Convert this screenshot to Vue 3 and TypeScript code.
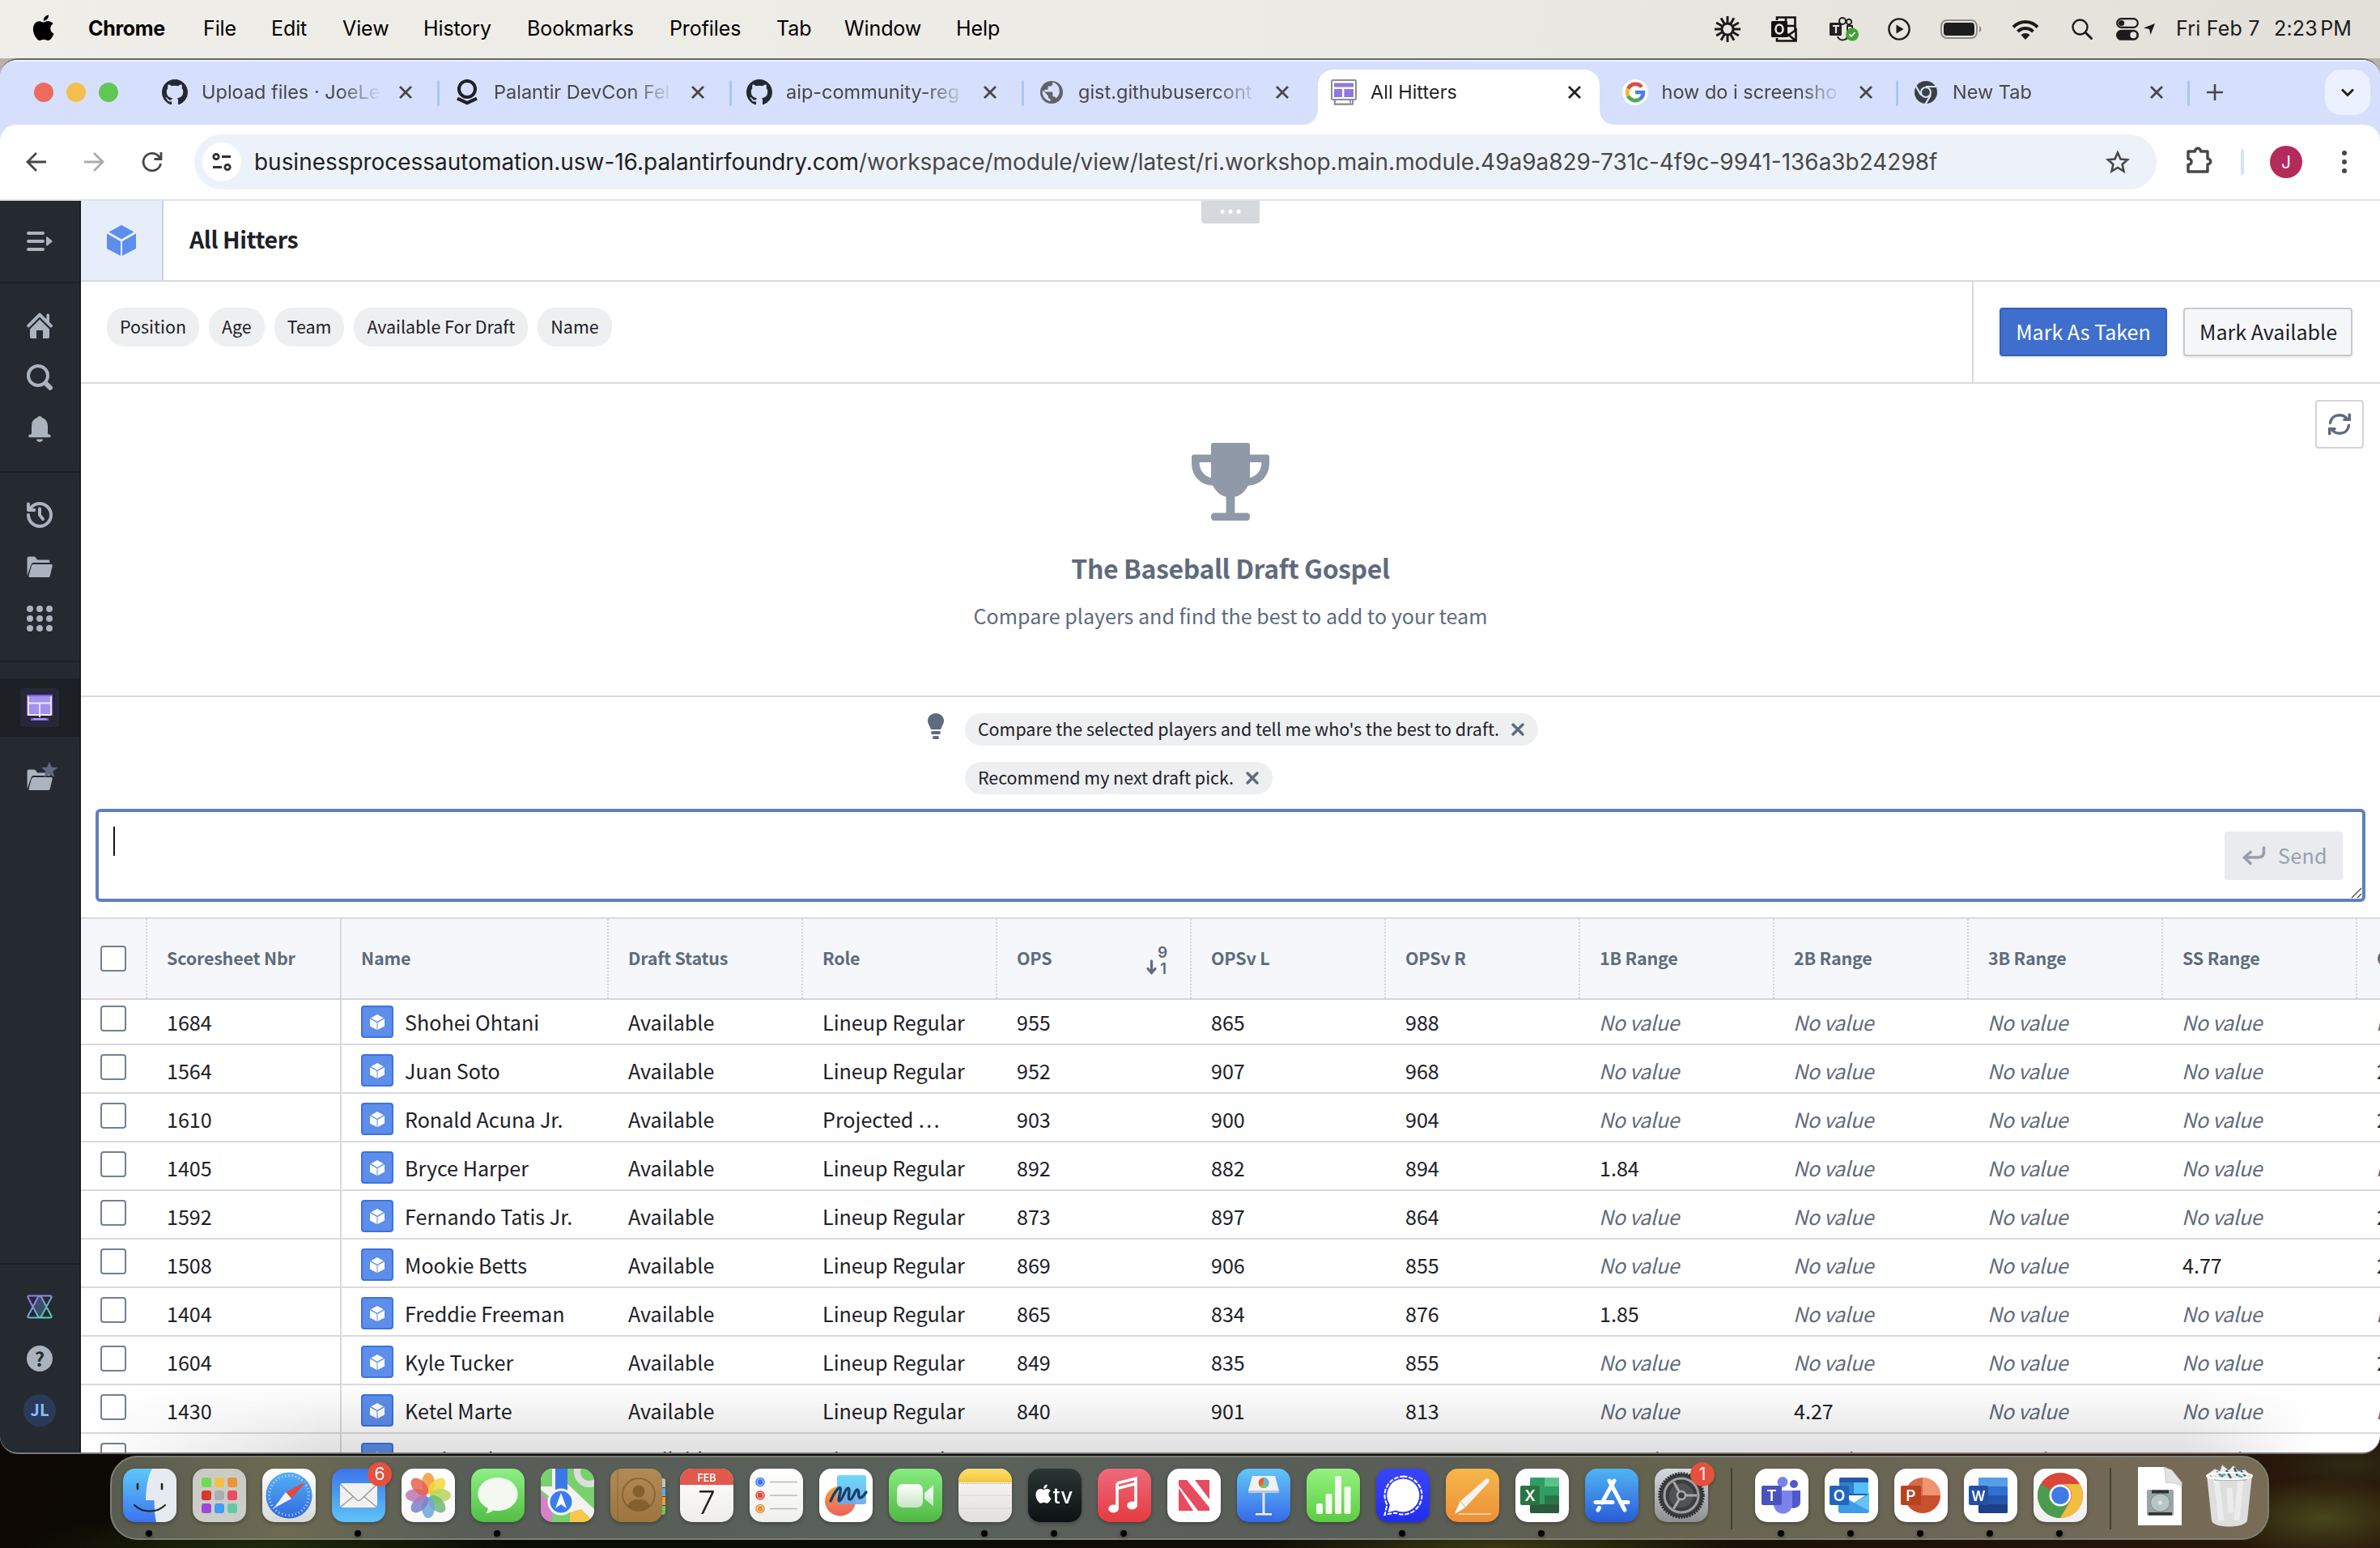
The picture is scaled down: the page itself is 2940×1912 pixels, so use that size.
<script setup lang="ts">
interface MenuItem { label: string; width: number }
interface Tab { title: string; icon: string; active?: boolean; sep?: boolean }
interface DockApp { name: string; running?: boolean; badge?: string }

const menus: MenuItem[] = [
  { label: 'File', width: 84 }, { label: 'Edit', width: 88 }, { label: 'View', width: 100 },
  { label: 'History', width: 128 }, { label: 'Bookmarks', width: 176 }, { label: 'Profiles', width: 132 },
  { label: 'Tab', width: 84 }, { label: 'Window', width: 138 }, { label: 'Help', width: 80 },
]

const gh = '<path fill="#24292f" d="M8 0C3.58 0 0 3.58 0 8c0 3.54 2.29 6.53 5.47 7.59.4.07.55-.17.55-.38 0-.19-.01-.82-.01-1.49-2.01.37-2.53-.49-2.69-.94-.09-.23-.48-.94-.82-1.13-.28-.15-.68-.52-.01-.53.63-.01 1.08.58 1.23.82.72 1.21 1.87.87 2.33.66.07-.52.28-.87.51-1.07-1.78-.2-3.64-.89-3.64-3.95 0-.87.31-1.59.82-2.15-.08-.2-.36-1.02.08-2.12 0 0 .67-.21 2.2.82.64-.18 1.32-.27 2-.27s1.36.09 2 .27c1.53-1.04 2.2-.82 2.2-.82.44 1.1.16 1.92.08 2.12.51.56.82 1.27.82 2.15 0 3.07-1.87 3.75-3.65 3.95.29.25.54.73.54 1.48 0 1.07-.01 1.93-.01 2.2 0 .21.15.46.55.38A8.01 8.01 0 0 0 16 8c0-4.42-3.58-8-8-8z"/>'
const favicons: Record<string, string> = {
  github: gh,
  palantir: '<circle cx="8" cy="6" r="5" fill="none" stroke="#1e2124" stroke-width="2"/><path d="M2 11.8 8 14.6l6-2.8" fill="none" stroke="#1e2124" stroke-width="2.1"/>',
  globe: '<circle cx="8" cy="8" r="7" fill="#5f6368"/><path fill="#d6e0fc" d="M8.6 1.8v1.1c0 .8-.6 1.4-1.4 1.4H5.8v1.4c0 .4-.3.7-.7.7H3.7v1.4H8c.4 0 .7.3.7.7v2.1h.7c.6 0 1.200.4 1.400 1a5.600 5.600 0 0 0-2.200-9.800zM7.300 13.500v-1.300c-.8 0-1.400-.6-1.400-1.400v-.7L2.500 6.700a5.600 5.600 0 0 0 4.800 6.800z"/>',
  workshop: '<path d="M4 12h8v3.300H2.300V12.500" fill="#fff" stroke="#8a8d91" stroke-width=".8"/><rect x=".5" y=".5" width="15" height="12" rx=".6" fill="#fff" stroke="#8a8d91"/><path fill="#8f78e0" d="M2 2.200h12v2.600H2zM2 6h5v5H2zM8.200 6H14v5H8.200z"/><path d="M13.500 13v2.400H2.500V13" fill="none" stroke="#8a8d91"/>',
  google: '<circle cx="8" cy="8" r="8" fill="#fff"/><g fill="none" stroke-width="2.300"><path d="M12 4.700A5 5 0 0 0 3.600 5.800" stroke="#d94f3d"/><path d="M3.600 5.800a5 5 0 0 0 0 4.500" stroke="#f2b83a"/><path d="M3.600 10.300A5 5 0 0 0 11.300 11.900" stroke="#53a857"/><path d="M11.200 12A5 5 0 0 0 13 8H8" stroke="#4a80ee"/></g>',
  chrome: '<circle cx="8" cy="8" r="7" fill="#3c4043"/><circle cx="8" cy="8" r="3" fill="none" stroke="#d6e0fc" stroke-width="1.100"/><path d="M8 4.500h6.500M5 9.700 1.900 4.300M11 9.700 7.800 15.200" stroke="#d6e0fc" stroke-width="1.100"/>',
}
const tabs: Tab[] = [
  { title: 'Upload files · JoeLe', icon: 'github', sep: true },
  { title: 'Palantir DevCon Fel', icon: 'palantir', sep: true },
  { title: 'aip-community-reg', icon: 'github', sep: true },
  { title: 'gist.githubusercont', icon: 'globe' },
  { title: 'All Hitters', icon: 'workshop', active: true },
  { title: 'how do i screensho', icon: 'google', sep: true },
  { title: 'New Tab', icon: 'chrome', sep: true },
]

const folder = '<path d="M.3 13.500V2.700C.3 2.100.7 1.700 1.300 1.700H4.500c.5 0 .8.300 1.100.7L6.600 3.700h6.600c.6 0 1 .4 1 1v.8H4.300C3.600 5.500 3 5.900 2.800 6.600z"/><path d="M4.200 6.500h11c.5 0 .8.400.7.9l-1.500 6.200c-.1.500-.6.900-1.100.9H2c-.5 0-.8-.4-.7-.9L3 7.400c.2-.5.600-.9 1.200-.9z"/>'
const sideTop: string[] = [
  '<path d="M16 8.300c0-.3-.1-.5-.3-.7L14 5.900V1.500c0-.5-.4-.8-.9-.8s-.9.300-.9.800v2.600L8.700.6A1 1 0 0 0 7.300.6l-7 7a1 1 0 0 0 1.400 1.400L8 2.700 14.300 9c.7.7 1.700.1 1.700-.7z"/><path d="M8 4.300 2 10.300V15c0 .6.400 1 1 1h3v-5h4v5h3c.6 0 1-.4 1-1v-4.700z"/>',
  '<path fill-rule="evenodd" d="m15.550 13.430-2.670-2.670A6.940 6.940 0 0 0 14 7a7 7 0 1 0-7 7c1.390 0 2.680-.420 3.760-1.110l2.670 2.670a1.500 1.500 0 0 0 2.120-2.130zM7 12A5 5 0 1 1 7 2a5 5 0 0 1 0 10z"/>',
  '<path d="M8 16c1.100 0 2-.8 2-1.700H6c0 .9.900 1.700 2 1.700zM14 11.400c-.6 0-1-.5-1-1V6c0-2.400-1.500-4.400-3.600-5.100A1.500 1.500 0 0 0 8 0c-.7 0-1.200.4-1.400.9A5.400 5.400 0 0 0 3 6v4.400c0 .5-.4 1-1 1-.5 0-.9.400-.9.900s.4.800.9.800h12c.5 0 .9-.4.900-.8s-.4-.9-.9-.9z"/>',
]
const sideMid: string[] = [
  '<path fill-rule="evenodd" d="M8 3.200c-.6 0-1 .4-1 1V8c0 .3.100.5.300.7l2 2.600a1 1 0 0 0 1.500-1.300L9 7.700V4.200c0-.6-.4-1-1-1z"/><path d="M8 0C5.600 0 3.500 1 2 2.700V1.300a1 1 0 0 0-2 0V5c0 .6.400 1 1 1h3.700a1 1 0 0 0 0-2H3.500A6 6 0 1 1 2 8a1 1 0 0 0-2 0 8 8 0 1 0 8-8z"/>',
  folder,
  '<circle cx="2" cy="2" r="2"/><circle cx="8" cy="2" r="2"/><circle cx="14" cy="2" r="2"/><circle cx="2" cy="8" r="2"/><circle cx="8" cy="8" r="2"/><circle cx="14" cy="8" r="2"/><circle cx="2" cy="14" r="2"/><circle cx="8" cy="14" r="2"/><circle cx="14" cy="14" r="2"/>',
]

const filters = ['Position', 'Age', 'Team', 'Available For Draft', 'Name']
const prompts = ["Compare the selected players and tell me who's the best to draft.", 'Recommend my next draft pick.']
const columns = ['Draft Status', 'Role', 'OPS', 'OPSv L', 'OPSv R', '1B Range', '2B Range', '3B Range', 'SS Range', 'OF Range']

const LR = 'Lineup Regular'
const NV = 'No value'
type Row = [string, string, string[]]
const rows: Row[] = [
  ['1684', 'Shohei Ohtani', [LR, '955', '865', '988', NV, NV, NV, NV, NV]],
  ['1564', 'Juan Soto', [LR, '952', '907', '968', NV, NV, NV, NV, '2.07']],
  ['1610', 'Ronald Acuna Jr.', ['Projected …', '903', '900', '904', NV, NV, NV, NV, '2.10']],
  ['1405', 'Bryce Harper', [LR, '892', '882', '894', '1.84', NV, NV, NV, NV]],
  ['1592', 'Fernando Tatis Jr.', [LR, '873', '897', '864', NV, NV, NV, NV, '2.15']],
  ['1508', 'Mookie Betts', [LR, '869', '906', '855', NV, NV, NV, '4.77', '2.12']],
  ['1404', 'Freddie Freeman', [LR, '865', '834', '876', '1.85', NV, NV, NV, NV]],
  ['1604', 'Kyle Tucker', [LR, '849', '835', '855', NV, NV, NV, NV, '2.10']],
  ['1430', 'Ketel Marte', [LR, '840', '901', '813', NV, '4.27', NV, NV, NV]],
  ['1650', 'Yordan Alvarez', [LR, '838', '840', '836', NV, NV, NV, NV, NV]],
]

const lin = (id: string, a: string, b: string) =>
  `<linearGradient id="${id}" x1="0" y1="0" x2="0" y2="1"><stop offset="0" stop-color="${a}"/><stop offset="1" stop-color="${b}"/></linearGradient>`
const tile = (id: string, a: string, b: string) => `${lin(id, a, b)}<rect width="66" height="66" rx="15" fill="url(#${id})"/>`
const letter = (c: string, x: number, y: number, s = 19) =>
  `<text x="${x}" y="${y}" font-family="Inter, sans-serif" font-weight="600" font-size="${s}" fill="#fff" text-anchor="middle">${c}</text>`
const petals = ['#f29a38', '#f3d63c', '#b9d25a', '#6fb876', '#6fa5dc', '#7d7fc9', '#b978b4', '#e8604f']
  .map((c, i) => `<ellipse cx="33" cy="18" rx="8" ry="13" fill="${c}" opacity=".85" transform="rotate(${i * 45} 33 33)"/>`).join('')
const pads = ['#6edb56', '#f2c245', '#e8963a', '#d8372b', '#a9afb3', '#ea4c64', '#9a4ad6', '#3f9df5', '#62c9a4']
  .map((c, i) => `<rect x="${11 + (i % 3) * 16}" y="${11 + Math.floor(i / 3) * 16}" width="12" height="12" rx="3" fill="${c}"/>`).join('')
const ticks = Array.from({ length: 36 }, (_, i) => `<path d="M33 7v3" stroke="#cfe4fb" stroke-width="1" transform="rotate(${i * 10} 33 33)"/>`).join('')
const apple = 'M17.050 12.540c-.030-2.890 2.360-4.280 2.470-4.350-1.350-1.970-3.440-2.240-4.190-2.270-1.780-.180-3.480 1.050-4.380 1.050-.9 0-2.300-1.020-3.780-1-1.950.030-3.740 1.130-4.740 2.870-2.020 3.510-.520 8.700 1.450 11.550.960 1.390 2.110 2.960 3.610 2.900 1.450-.060 2-.940 3.750-.940s2.250.940 3.780.910c1.560-.030 2.550-1.420 3.510-2.820 1.100-1.620 1.560-3.180 1.580-3.260-.030-.020-3.030-1.160-3.060-4.640zM14.170 4.060c.8-.970 1.340-2.310 1.190-3.650-1.150.050-2.540.770-3.370 1.730-.740.860-1.390 2.230-1.210 3.540 1.280.1 2.590-.650 3.390-1.620z'

const art: Record<string, string> = {
  Finder: `${tile('fi', '#5fc8f8', '#3c74f0')}<path d="M36 0h15a15 15 0 0 1 15 15v36a15 15 0 0 1-15 15H41c-1.500-7-2.300-15-2.500-27H28C28 24 31 8 36 0z" fill="#e6eaf1"/><path d="M18 19v6M48 19v6" stroke="#222" stroke-width="2.600" stroke-linecap="round"/><path d="M14 45c10 10 28 10 38 0" fill="none" stroke="#222" stroke-width="2" stroke-linecap="round"/>`,
  Launchpad: `${tile('lp', '#cbcbc5', '#cdcec8')}${pads}`,
  Safari: `${tile('sf', '#ffffff', '#d9d9d9')}${lin('sf2', '#55b0f5', '#2f6be0')}<circle cx="33" cy="33" r="28.500" fill="url(#sf2)"/>${ticks}<path d="M54 16 29 29l7 8z" fill="#e0493c"/><path d="M14 49 29 29l7 8z" fill="#f3f4f6"/>`,
  Mail: `${tile('ml', '#3e74ea', '#5fc3f8')}<rect x="10" y="18" width="46" height="30" rx="4" fill="#f1f1f1"/><path d="M11 20l19 18c2 2 4 2 6 0l19-18M11 47l16-13M55 47 39 34" fill="none" stroke="#999" stroke-width="1.400"/>`,
  Photos: `${tile('ph', '#ffffff', '#f8f8f8')}${petals}`,
  Messages: `${tile('ms', '#8df085', '#52bf45')}<path d="M33 11c14 0 24.500 9 24.500 20.500S47 52 33 52c-2 0-4-.2-6-.6-2 2-5 3.400-9 3.600 2-2 3-4 2.600-6.200C13 45 8.500 38.800 8.500 31.500 8.500 20 19 11 33 11z" fill="#f3f9f1"/>`,
  Maps: `<clipPath id="mpc"><rect width="66" height="66" rx="15"/></clipPath><g clip-path="url(#mpc)"><rect width="66" height="66" fill="#78d16c"/><path d="M0 30 14 44V66H0z" fill="#d582c8"/><path d="M0 26 66 78V50L28 14V0H0z" fill="#f2f2f2"/><path d="M0 0h14v22H0z" fill="#78d16c"/><path d="M0 34 12 46V66H0z" fill="#d582c8"/><path d="M36 66V54l14-4 16 16z" fill="#f4c84a"/><path d="M18 0h15v30H18z" fill="#3a78ea"/><circle cx="60" cy="4" r="15" fill="none" stroke="#ddd" stroke-width="8"/></g><circle cx="25" cy="41" r="15" fill="#3a7df0" stroke="#f6f6f6" stroke-width="3"/><path d="m25 30 7 19-7-5-7 5z" fill="#fff"/>`,
  Contacts: `<path d="M60 12h5a3 3 0 0 1 3 3v8h-8z" fill="#bfc3c6"/><path d="M60 24h8v10h-8z" fill="#58a9ea"/><path d="M60 35h8v10h-8z" fill="#f09a3c"/><path d="M60 46h8v8a3 3 0 0 1-3 3h-5z" fill="#69c95c"/>${lin('ct', '#b18a55', '#9c753f')}<rect width="64" height="66" rx="14" fill="url(#ct)"/><path d="M9 1v64" stroke="#8d6937" stroke-width="1"/><circle cx="35" cy="32" r="20" fill="none" stroke="#84602f" stroke-width="1.600"/><circle cx="35" cy="28" r="7.500" fill="#84602f"/><path d="M21 46c3-6 8-8 14-8s11 2 14 8c-8 8-20 8-28 0z" fill="#84602f"/>`,
  Calendar: `${tile('cl', '#ffffff', '#efede9')}<path d="M0 20v-5A15 15 0 0 1 15 0h36a15 15 0 0 1 15 15v5z" fill="#e0594c"/>${letter('FEB', 33, 16, 12.5)}<text x="33" y="56" font-family="Inter, sans-serif" font-size="39" font-weight="300" fill="#222" text-anchor="middle">7</text>`,
  Reminders: `${tile('rm', '#ffffff', '#efefec')}<g fill="none" stroke-width="1.600"><circle cx="13" cy="16.500" r="5" stroke="#3478f6"/><circle cx="13" cy="33" r="5" stroke="#e0493c"/><circle cx="13" cy="49.500" r="5" stroke="#e8923a"/></g><circle cx="13" cy="16.500" r="3.400" fill="#3478f6"/><circle cx="13" cy="33" r="3.400" fill="#e0493c"/><circle cx="13" cy="49.500" r="3.400" fill="#e8923a"/><path d="M25 16.500h34M25 33h34M25 49.500h34" stroke="#b9b9b9" stroke-width="1.400"/>`,
  Freeform: `${tile('ff', '#ffffff', '#ffffff')}${lin('ff1', '#f5a53f', '#ec5f5c')}${lin('ff2', '#63d6fa', '#6aa8ee')}<ellipse cx="26" cy="40" rx="19" ry="18.500" fill="url(#ff1)"/><rect x="22" y="8" width="36" height="36" rx="3" fill="url(#ff2)" opacity=".93"/><path d="M14 40c4-10 10-18 12-16s-4 16-1 16 8-17 11-16-2 14 2 14 6-12 9-12 0 11 4 10 5-5 7-7" fill="none" stroke="#173f6b" stroke-width="3.400" stroke-linecap="round"/>`,
  FaceTime: `${tile('ft', '#86ec7f', '#52b845')}${lin('ft2', '#ffffff', '#c7e5c2')}<rect x="10" y="19" width="32" height="29" rx="7" fill="url(#ft2)"/><path d="M44 30 55 20.500v26L44 37z" fill="url(#ft2)"/>`,
  Notes: `${tile('nt', '#f9f8f6', '#e3e1dd')}${lin('nt2', '#fbdf72', '#f5c63c')}<path d="M0 17v-2A15 15 0 0 1 15 0h36a15 15 0 0 1 15 15v2z" fill="url(#nt2)"/><path d="M1 18.500h64" stroke="#a09b90" stroke-width="1.200" stroke-dasharray="1 1.500"/><path d="M1 33h64M1 49h64" stroke="#cfcfd2" stroke-width="1.200"/>`,
  TV: `${tile('tv', '#2b3734', '#0d1113')}<path transform="translate(8 19) scale(1.020)" d="${apple}" fill="#fff"/><text x="43" y="43" font-family="Inter, sans-serif" font-size="26" font-weight="500" fill="#fff" text-anchor="middle">tv</text>`,
  Music: `${tile('mu', '#ee6a7c', '#e53a40')}<path d="M24 18 47 12v34M24 50V18M24 24.500l23-6" fill="none" stroke="#fff" stroke-width="3.600"/><ellipse cx="19.500" cy="49.500" rx="6.200" ry="5" fill="#fff"/><ellipse cx="42.500" cy="45.500" rx="6.200" ry="5" fill="#fff"/>`,
  News: `${tile('nw', '#ffffff', '#ffffff')}<path d="M14 14h8L52 46v6h-7L14 20z" fill="#e84b5f" opacity="0"/><path d="M14 24v28h18z" fill="#e84b5f"/><path d="M14 14h10l28 34v4H38L14 21z" fill="#e84b5f"/><path d="M34 14h18v24z" fill="#e84b5f"/>`,
  Keynote: `${tile('kn', '#62c6fa', '#3768e8')}<path d="M19 9h28l5 18v3H14v-3z" fill="#eef1f5"/><path d="M14 27h38v3H14z" fill="#b8c7d6"/><circle cx="33" cy="17.500" r="6.500" fill="#e8623f"/><path d="M33 17.500V11a6.500 6.500 0 0 1 5 10.600z" fill="#5ab7e8"/><path d="M33 17.500 38 21.600a6.500 6.500 0 0 1-9 1.200z" fill="#7ac95a"/><path d="M33 30v25" stroke="#e2e8f0" stroke-width="3"/><path d="M23 55h20v2.500H23z" fill="#eef1f5"/>`,
  Numbers: `${tile('nu', '#94f27f', '#5dcb43')}<g fill="#f3fbf0"><rect x="12" y="43" width="8" height="13" rx="2"/><rect x="23.500" y="31" width="8" height="25" rx="2"/><rect x="35" y="9" width="8" height="47" rx="2"/><rect x="46.500" y="22" width="8" height="34" rx="2"/></g>`,
  Signal: `${tile('sg', '#3b45fd', '#222cf2')}<path d="M33 12.500a20.500 20.500 0 1 1-9 39L14.500 54l2.400-9.500A20.500 20.500 0 0 1 33 12.500z" fill="#fff"/><path d="M33 9.500a23.500 23.500 0 1 1-9.500 45L10.500 57l3-12.500A23.500 23.500 0 0 1 33 9.500z" fill="none" stroke="#fff" stroke-width="2" stroke-dasharray="5.500 1.800"/>`,
  Pages: `${tile('pg', '#f5b74a', '#ee8f38')}<path d="M11 56 18 40 49 13c3-2 6 1 4 4L24 48z" fill="#f6f3ef"/><path d="M11 56l7-16 3 3 3 5z" fill="#fff"/><path d="M18 40l6 8" stroke="#b9a894"/><path d="M16 56h40" stroke="#f9cf9b" stroke-width="2.200"/>`,
  Excel: `${tile('xl', '#ffffff', '#ffffff')}<rect x="18" y="11" width="36" height="44" rx="2" fill="#2f9d64"/><path d="M36 11h16a2 2 0 0 1 2 2v9H36z" fill="#5cc28b"/><path d="M36 33h18v11H36z" fill="#2b7348"/><path d="M18 44h36v9a2 2 0 0 1-2 2H20a2 2 0 0 1-2-2z" fill="#2a5a3b"/><rect x="6" y="21" width="24" height="24" rx="2" fill="#2a7444"/>${letter('X', 18, 40)}`,
  'App Store': `${tile('as', '#4fb4f4', '#2a5cd8')}<g stroke="#fff" stroke-width="5" stroke-linecap="round" fill="none"><path d="M30 15 49 51M36 15 21 42M13 41.500h21M44 41.500h9M17.500 48.500l-1.500 2.500"/></g>`,
  Settings: `${tile('st', '#d3dbe0', '#8f8f91')}<circle cx="33" cy="33" r="27" fill="#3b3c3e"/><circle cx="33" cy="33" r="27" fill="none" stroke="#2c2c2e" stroke-width="3.500" stroke-dasharray="2 1.400"/><circle cx="33" cy="33" r="21" fill="none" stroke="#9fa1a3" stroke-width="3"/><circle cx="33" cy="33" r="15" fill="#515254"/><path d="M33 33h19M33 33 23.500 16.500M33 33 23.500 49.500" stroke="#a9abad" stroke-width="3"/><circle cx="33" cy="33" r="5" fill="#3b3c3e" stroke="#a9abad" stroke-width="2.500"/>`,
  Teams: `${tile('tm', '#ffffff', '#ffffff')}<circle cx="34" cy="16.500" r="6.500" fill="#7b83eb"/><circle cx="48" cy="19" r="5" fill="#5059c9"/><path d="M42 27h14v13a8 8 0 0 1-14 6z" fill="#5059c9"/><path d="M23 27h23v17a11.500 11.500 0 0 1-23 0z" fill="#7b83eb"/><rect x="8" y="21" width="25" height="24" rx="2" fill="#4a52bd"/>${letter('T', 20.5, 40)}`,
  Outlook: `${tile('ol', '#ffffff', '#ffffff')}<rect x="18" y="11" width="36" height="22" rx="2" fill="#2459a8"/><path d="M18 17h18v14H18z" fill="#2f7fd2"/><path d="M36 17h18v14H36z" fill="#52c0f6"/><path d="M17 30l19 12 19-12v22a3 3 0 0 1-3 3H20a3 3 0 0 1-3-3z" fill="#3f9be8"/><path d="M55 32v20L36 42z" fill="#67c2f6"/><rect x="6" y="21" width="24" height="24" rx="2" fill="#2166bd"/>${letter('O', 18, 40)}`,
  PowerPoint: `${tile('pp', '#ffffff', '#ffffff')}<circle cx="35" cy="33" r="22" fill="#d8694a"/><path d="M35 11a22 22 0 0 1 22 22H35z" fill="#f09472"/><path d="M35 33h22a22 22 0 0 1-42 9z" fill="#c8502e"/><rect x="8" y="21" width="25" height="24" rx="2" fill="#b9421f"/>${letter('P', 20.5, 40)}`,
  Word: `${tile('wd', '#ffffff', '#ffffff')}<rect x="18" y="11" width="36" height="44" rx="2" fill="#3070cf"/><path d="M18 22v-9a2 2 0 0 1 2-2h32a2 2 0 0 1 2 2v9z" fill="#559de8"/><path d="M18 33h36v11H18z" fill="#2456b0"/><path d="M18 44h36v9a2 2 0 0 1-2 2H20a2 2 0 0 1-2-2z" fill="#1f3f8a"/><rect x="6" y="21" width="24" height="24" rx="2" fill="#2450a4"/>${letter('W', 18, 40, 17)}`,
  Chrome: `${tile('gc', '#ffffff', '#efefef')}<circle cx="33" cy="33" r="28" fill="#d9463a"/><path d="M33 33 8.800 19A28 28 0 0 0 33 61l12-21z" fill="#4a9c50"/><path d="M33 19h24.200A28 28 0 0 1 33 61l12.200-21A14 14 0 0 0 33 19z" fill="#f3bd3f"/><circle cx="33" cy="33" r="13.500" fill="#fff"/><circle cx="33" cy="33" r="10.800" fill="#3f7ae6"/>`,
}
const dockMain: DockApp[] = [
  { name: 'Finder', running: true }, { name: 'Launchpad' }, { name: 'Safari' }, { name: 'Mail', running: true, badge: '6' },
  { name: 'Photos' }, { name: 'Messages', running: true }, { name: 'Maps' }, { name: 'Contacts' }, { name: 'Calendar' },
  { name: 'Reminders' }, { name: 'Freeform' }, { name: 'FaceTime' }, { name: 'Notes', running: true }, { name: 'TV', running: true },
  { name: 'Music', running: true }, { name: 'News' }, { name: 'Keynote' }, { name: 'Numbers' }, { name: 'Signal', running: true },
  { name: 'Pages' }, { name: 'Excel', running: true }, { name: 'App Store' }, { name: 'Settings', badge: '1' },
]
const dockRecent: DockApp[] = [
  { name: 'Teams', running: true }, { name: 'Outlook', running: true }, { name: 'PowerPoint', running: true },
  { name: 'Word', running: true }, { name: 'Chrome', running: true },
]
const dockGroups = [dockMain, dockRecent]
const rays = Array.from({ length: 12 }, (_, i) => i * 30)
</script>

<template>
  <div class="desktop">
    <div class="menubar">
      <svg class="apple" viewBox="2 0 18 24"><path :d="apple" /></svg>
      <span class="app-name">Chrome</span>
      <span v-for="m in menus" :key="m.label" class="menu" :style="{ width: m.width + 'px' }">{{ m.label }}</span>
      <div class="status">
        <svg class="s-burst" viewBox="0 0 32 32"><circle cx="16" cy="16" r="7" fill="none" stroke="#1b1b1b" stroke-width="3" /><path v-for="r in rays" :key="r" d="M16 0v9" stroke="#1b1b1b" stroke-width="3" :transform="`rotate(${r} 16 16)`" /></svg>
        <svg class="s-outlook" viewBox="0 0 32 32"><path d="M7 5V1.500h22.500V17M7 27v3.500h23.500V17L19 25M30 30 20 22M18 1.500V12h11.500" fill="none" stroke="#111" stroke-width="2.600" /><rect y="6" width="20" height="20" rx="1.500" fill="#111" /><ellipse cx="10" cy="16" rx="4.500" ry="5.500" fill="none" stroke="#e8e6e0" stroke-width="2.600" /></svg>
        <svg class="s-teams" viewBox="0 0 36 30"><g fill="none" stroke="#222" stroke-width="2"><circle cx="16" cy="5" r="4" /><circle cx="24" cy="6" r="3.200" /><path d="M10 24c2 6 12 6 12-1V11h6v6" /></g><rect y="7" width="15" height="16" rx="1.500" fill="#222" /><path d="M4 11h8M8 11v9" stroke="#e8e6e0" stroke-width="2.200" /><circle cx="28" cy="21.500" r="8" fill="#47a035" /><path d="m24.500 21.500 2.500 2.500 4.500-5" fill="none" stroke="#fff" stroke-width="1.800" /></svg>
        <svg class="s-play" viewBox="0 0 28 28"><circle cx="14" cy="14" r="12.600" fill="none" stroke="#1b1b1b" stroke-width="2.400" /><path d="m10.500 8.500 9 5.500-9 5.500z" fill="#1b1b1b" /></svg>
        <svg class="s-batt" viewBox="0 0 52 26"><rect x="1" y="2" width="44" height="22" rx="7" fill="none" stroke="#8d8c88" stroke-width="2" /><rect x="4" y="5" width="38" height="16" rx="4" fill="#1d1d1b" /><path d="M48 9c3 1 3 7 0 8z" fill="#8d8c88" /></svg>
        <svg class="s-wifi" viewBox="0 0 34 25"><g fill="none" stroke="#1b1b1b" stroke-width="4"><path d="M2 9.500c8.500-8.600 21.500-8.600 30 0" /><path d="M7.500 15c5.500-5.200 13.500-5.200 19 0" /></g><path d="M17 25l-5.500-5.800c3-2.900 8-2.900 11 0z" fill="#1b1b1b" /></svg>
        <svg class="s-search" viewBox="0 0 26 26"><circle cx="10.500" cy="10.500" r="9" fill="none" stroke="#1b1b1b" stroke-width="2.400" /><path d="m17 17 7.500 7.500" stroke="#1b1b1b" stroke-width="3" stroke-linecap="round" /></svg>
        <svg class="s-cc" viewBox="0 0 28 28"><rect x="1.200" y="1.200" width="25.600" height="10.600" rx="5.300" fill="none" stroke="#1b1b1b" stroke-width="2.200" /><circle cx="6.600" cy="6.500" r="3.600" fill="#1b1b1b" /><rect y="14.800" width="28" height="13" rx="6.500" fill="#1b1b1b" /><circle cx="21.300" cy="21.300" r="4" fill="#e6e4de" /></svg>
        <svg class="s-loc" viewBox="0 0 16 16"><path d="M15 1 9.500 15 8 8 1 6.500z" fill="#1b1b1b" /></svg>
        <span class="date">Fri Feb 7</span><span class="time">2:23 PM</span>
      </div>
    </div>

    <div class="window">
      <div class="tabstrip">
        <div class="lights"><i class="red"></i><i class="yellow"></i><i class="green"></i></div>
        <div v-for="t in tabs" :key="t.title" class="tab" :class="{ active: t.active, sep: t.sep }">
          <svg v-if="t.active" class="tab-shape" viewBox="0 0 388 68"><path d="M0 68c14 0 20-8 20-20V20C20 8 28 0 40 0h308c12 0 20 8 20 20v28c0 12 6 20 20 20z" fill="#fff" /></svg>
          <svg class="fav" viewBox="0 0 16 16" v-html="favicons[t.icon]"></svg>
          <span class="tab-title">{{ t.title }}</span>
          <svg class="close" viewBox="0 0 16 16"><path d="m1 1 14 14M15 1 1 15" /></svg>
        </div>
        <svg class="plus" viewBox="0 0 20 20"><path d="M10 0v20M0 10h20" /></svg>
        <div class="dropdown"><svg viewBox="0 0 16 10"><path d="m1 1.500 7 7 7-7" /></svg></div>
      </div>

      <div class="toolbar-bg"><div class="toolbar">
        <svg class="nav back" viewBox="0 0 26 26"><path d="M25 13H3M13 2 2 13l11 11" /></svg>
        <svg class="nav fwd" viewBox="0 0 26 26"><path d="M1 13h22M13 2l11 11-11 11" /></svg>
        <svg class="nav reload" viewBox="0 0 26 26"><path d="M23.500 15A10.800 10.800 0 1 1 21 6l3 3.500M24 1v8.500h-8.500" /></svg>
        <div class="omnibox">
          <span class="site"><svg viewBox="0 0 24 24"><circle cx="5" cy="5.500" r="3.200" /><path d="M12 5.500h11M1 18.500h11" /><circle cx="19" cy="18.500" r="3.200" /></svg></span>
          <span class="url"><b>businessprocessautomation.usw-16.palantirfoundry.com</b>/workspace/module/view/latest/ri.workshop.main.module.49a9a829-731c-4f9c-9941-136a3b24298f</span>
          <svg class="star" viewBox="0 0 30 30"><path d="m15 3.500 3.500 8 8.500.8-6.400 5.700 1.900 8.500-7.500-4.500-7.500 4.500 1.900-8.500L3 12.300l8.500-.8z" /></svg>
        </div>
        <svg class="puzzle" viewBox="0 0 34 34"><path d="M3 6h8.500c0-5 7-5 7 0H27v9c5 0 5 7 0 7v9H3v-8.500c5.500 0 5.500-7.500 0-7.500z" /></svg>
        <i class="tb-div"></i>
        <span class="avatar">J</span>
        <span class="kebab"><i></i><i></i><i></i></span>
      </div></div>

      <div class="body">
        <nav class="sidebar">
          <div class="side-menu"><svg viewBox="0 0 32 26"><path d="M2 3h18M2 13h18M2 23h18" stroke="#abb3bf" stroke-width="4" stroke-linecap="round" /><path d="M24 8.500c0-1.500 1-1.500 2-.5l5 4c.7.600.7 1.400 0 2l-5 4c-1 1-2 1-2-.5z" fill="#abb3bf" /></svg></div>
          <div class="side-group"><div v-for="(p, i) in sideTop" :key="i" class="side-item"><svg viewBox="0 0 16 16" v-html="p"></svg></div></div>
          <div class="side-group"><div v-for="(p, i) in sideMid" :key="i" class="side-item"><svg viewBox="0 0 16 16" v-html="p"></svg></div></div>
          <div class="side-active"><span><svg viewBox="0 0 32 32"><rect x="1" y="1" width="30" height="24" fill="#a490ee" stroke="#7b61d8" stroke-width="2" /><path d="M1.500 10.500h29M16 11v17M1.500 25h29M2 2v23M30 2v23" stroke="#eee9ff" stroke-width="1.800" /><path d="M5 30.500h22" stroke="#7b61d8" stroke-width="3" /><path d="M8 30h16" stroke="#cfc4fa" stroke-width="1.200" /></svg></span></div>
          <div class="side-star"><svg viewBox="0 0 20 16"><g fill="#abb3bf" v-html="folder"></g><path d="m14 -3 1.400 3.200 3.600.3-2.700 2.400.9 3.600L14 4.600l-3.200 1.900.9-3.600L9 .5l3.600-.3z" fill="#5f6b7c" /></svg></div>
          <div class="side-bottom">
            <div class="side-item"><svg viewBox="0 0 32 32"><linearGradient id="aip" gradientUnits="userSpaceOnUse" x1="4" y1="0" x2="28" y2="32"><stop offset=".2" stop-color="#9a7cf0" /><stop offset=".8" stop-color="#4fd0b4" /></linearGradient><path d="M15 3h2l6.500 13L17 29h-2L8.500 16z" fill="#3c4f66" /><path d="M3 2.500h26c1.500 0 2 1.200 1.400 2.300L18 28c-1 1.800-3 1.800-4 0L1.600 4.800C1 3.700 1.500 2.500 3 2.500zM3 29.500h26c1.500 0 2-1.200 1.400-2.300L18 4c-1-1.800-3-1.800-4 0L1.600 27.200c-.6 1.100-.1 2.300 1.400 2.300z" fill="none" stroke="url(#aip)" stroke-width="2" /></svg></div>
            <div class="side-item"><span class="help">?</span></div>
            <div class="side-item"><span class="jl">JL</span></div>
          </div>
        </nav>

        <main class="main">
          <header class="head">
            <div class="cube"><svg viewBox="0 0 36 38"><path d="M18 0 33.500 8.500 18 17.500 2.500 8.500z" /><path d="M0 10.500 17 20.200V38L0 29zM36 10.500 19 20.200V38l17-9z" /></svg></div>
            <h1>All Hitters</h1>
            <div class="grip">•••</div>
          </header>
          <section class="filters">
            <div class="pills"><span v-for="f in filters" :key="f">{{ f }}</span></div>
            <div class="actions"><button class="primary">Mark As Taken</button><button>Mark Available</button></div>
          </section>
          <section class="hero">
            <div class="refresh"><svg viewBox="0 0 28 28"><g fill="none" stroke="#5f6b7c" stroke-width="3.400" stroke-linecap="round"><path d="M2.500 12.500C3.500 6 8.500 2.700 14 2.700c4 0 7 1.600 9.500 4.800" /><path d="M25.500 15.500C24.500 22 19.500 25.300 14 25.300c-4 0-7-1.600-9.500-4.800" /></g><path d="M26.300.5c1 0 1.700.6 1.700 1.700V10H20c-2.500 0-2.500-3 0-3.200L24.500 6V2.200c0-1 .7-1.700 1.800-1.700zM1.700 27.500C.7 27.500 0 26.900 0 25.800V18h8c2.500 0 2.500 3 0 3.200L3.500 22v3.800c0 1-.7 1.700-1.800 1.700z" fill="#5f6b7c" /></svg></div>
            <svg class="trophy" viewBox="0 0 16 16"><path fill-rule="evenodd" d="M15.500 2.400H12V.5c0-.3-.2-.5-.5-.5h-7c-.3 0-.5.2-.5.5v1.900H.5c-.3 0-.5.2-.5.500v1.300C0 6.600 1.700 8.700 4.400 8.800c.5 1.100 1.500 2.100 2.700 2.300v3.300H4.600c-.4 0-.6.3-.6.800s.2.800.6.800h6.800c.4 0 .6-.3.6-.8s-.2-.8-.6-.8H8.900v-3.300c1.200-.2 2.200-1.200 2.700-2.300 2.700-.1 4.400-2.200 4.400-4.600V2.900c0-.3-.2-.5-.5-.5zM4 7.200C2.500 6.800 1.600 5.600 1.600 4H4zM12 7.200V4h2.400c0 1.600-.9 2.800-2.400 3.200z" /></svg>
            <h2>The Baseball Draft Gospel</h2>
            <p>Compare players and find the best to add to your team</p>
          </section>
          <section class="prompts">
            <svg class="bulb" viewBox="0 0 20 32"><path d="M10 0C4 0 0 4.300 0 9.500c0 3.500 2.400 5.500 3.200 8.500.2 1 .6 2 1.600 2h10.400c1 0 1.400-1 1.600-2C17.600 15 20 13 20 9.500 20 4.300 16 0 10 0z" /><rect x="4" y="22" width="12" height="4" rx="2" /><rect x="6" y="28" width="8" height="4" rx="2" /></svg>
            <div class="chips"><span v-for="p in prompts" :key="p" class="chip"><em>{{ p }}</em><svg viewBox="0 0 16 16"><path d="m2 2 12 12M14 2 2 14" /></svg></span></div>
          </section>
          <div class="input">
            <i class="caret"></i>
            <button class="send"><svg viewBox="0 0 28 24"><path d="M26.500 2v5c0 5-3 7-7 7H4M10 7.500 2.500 14l7.500 7.500" /></svg>Send</button>
            <svg class="resize" viewBox="0 0 14 14"><path d="M1 13 13 1M8 13l5-5" /></svg>
          </div>
          <section class="table">
            <div class="thead">
              <div class="c-check"><i class="box"></i></div>
              <div class="c-nbr">Scoresheet Nbr</div>
              <div class="c-name">Name</div>
              <div v-for="c in columns" :key="c" class="c-val">
                {{ c }}
                <svg v-if="c === 'OPS'" class="sort" viewBox="0 0 28 38"><path d="M7.500 20v13M3 29.500l4.500 5 4.500-5" fill="none" stroke="#5f6b7c" stroke-width="3.200" stroke-linecap="round" /><text x="21" y="16" text-anchor="middle">9</text><text x="22" y="36" text-anchor="middle">1</text></svg>
              </div>
            </div>
            <div v-for="r in rows" :key="r[0]" class="row">
              <div class="c-check"><i class="box"></i></div>
              <div class="c-nbr">{{ r[0] }}</div>
              <div class="c-name"><span class="obj"><svg viewBox="0 0 36 38"><path d="M18 0 33.500 8.500 18 17.500 2.500 8.500z" /><path d="M0 10.500 17 20.200V38L0 29zM36 10.500 19 20.200V38l17-9z" /></svg></span>{{ r[1] }}</div>
              <div class="c-val">Available</div>
              <div v-for="(v, i) in r[2]" :key="i" class="c-val" :class="{ none: v === NV }">{{ v }}</div>
            </div>
          </section>
        </main>
      </div>
      <div class="shade"></div>
    </div>

    <div class="dock">
      <template v-for="(g, gi) in dockGroups" :key="gi">
        <div v-for="a in g" :key="a.name" class="app">
          <svg viewBox="0 0 66 66" v-html="art[a.name]"></svg>
          <span v-if="a.badge" class="badge">{{ a.badge }}</span>
          <i v-if="a.running" class="run"></i>
        </div>
        <i class="dock-sep"></i>
      </template>
      <svg class="doc" viewBox="0 0 56 72"><path d="M1 0h32l22 20v52H1z" fill="#fff" /><path d="M33 0c3 6 1 14 3 20 6-2 14 0 19 4V19L43 4z" fill="#e3e3e3" stroke="#c9c9c9" /><rect x="12" y="28" width="33" height="32" rx="2" fill="#9aa5a8" /><ellipse cx="28.500" cy="44" rx="12" ry="11" fill="#b9c4c6" stroke="#7f898c" /><circle cx="28.500" cy="44" r="2.500" fill="#dfe5e6" /><path d="M18 28.500h21v4H18zM14 56h29v3.500H14z" fill="#2e3335" /></svg>
      <svg class="trash" viewBox="0 0 60 78"><path d="M2 14 8 70c1 10 42 10 44 0l6-56z" fill="#dedede" /><path d="M14 20l6 50M44 20l-5 50M30 30l2 30" stroke="#ececec" stroke-width="7" /><path d="m4 12 8-6 6 3 3-8 8 7 6-6 6 7 8-2 7 7-6 6H12z" fill="#e9e9e9" stroke="#8a8a8a" /><path d="m14 10 8 6M26 8l6 10M36 5l4 10M44 9l6 6" stroke="#4a5a66" stroke-width="2.600" /><path d="m18 15 7-2M40 14l6 3" stroke="#3fa7c4" stroke-width="2.500" /><ellipse cx="30" cy="15" rx="28" ry="4" fill="none" stroke="#fff" stroke-width="2" /></svg>
    </div>
  </div>
</template>

<style>
html, body { margin: 0; overflow: hidden; }
</style>

<style scoped>
* { box-sizing: border-box; }
.desktop {
  width: 2940px; height: 1912px; overflow: hidden; display: flex; flex-direction: column;
  font-family: Inter, "Liberation Sans", sans-serif;
  background: linear-gradient(#b8b2a8 0, #b8b2a8 200px, transparent 201px),
    radial-gradient(ellipse 130px 50px at 2870px 1875px, #47461c, transparent),
    radial-gradient(ellipse 90px 30px at 2900px 1810px, #2c2a12, transparent),
    radial-gradient(ellipse 300px 40px at 1850px 1912px, #3a3a14, transparent),
    radial-gradient(ellipse 300px 50px at 330px 1912px, #202a0c, transparent),
    linear-gradient(90deg, #0d0804, #090d06 30%, #100c05 60%, #2a180a);
}
svg { display: block; flex: none; overflow: visible; }
.menubar {
  height: 72px; flex: none; display: flex; align-items: center; padding-left: 41px;
  background: linear-gradient(90deg, #efeee8, #ecebe5 50%, #e3e0d9); color: #000; font-size: 25px; white-space: nowrap;
}
.apple { width: 26px; height: 33px; margin-top: -4px; }
.app-name { width: 142px; margin-left: 42px; font-weight: 700; letter-spacing: -.3px; }
.menu, .app-name, .date, .time { margin-top: -2px; }
.menu { letter-spacing: -.1px; }
.status { display: flex; align-items: center; margin-left: auto; padding-right: 32px; color: #1b1b1b; }
.s-burst { width: 32px; margin-right: 38px; }
.s-outlook { width: 32px; margin-right: 40px; }
.s-teams { width: 36px; margin-right: 36px; }
.s-play { width: 28px; margin-right: 37px; }
.s-batt { width: 52px; margin-right: 36px; }
.s-wifi { width: 34px; margin-right: 40px; }
.s-search { width: 26px; margin-right: 29px; }
.s-cc { width: 28px; margin-right: 5px; }
.s-loc { width: 16px; margin-right: 25px; }
.date { width: 121px; letter-spacing: .2px; }
.time { width: 99px; word-spacing: -4px; letter-spacing: .2px; }

.window {
  position: relative; height: 1724px; flex: none; border-top: 2px solid #66676b; border-bottom: 2px solid #77787a;
  border-radius: 22px; overflow: hidden; background: #fff;
}
.tabstrip { height: 80px; background: #d6e0fc; display: flex; align-items: center; box-shadow: inset 0 2px 0 #eef3fe; }
.lights { width: 180px; padding-left: 42px; display: flex; gap: 16px; }
.lights i { width: 24px; height: 24px; border-radius: 50%; }
.red { background: #ed6a5f; } .yellow { background: #f5bf4f; } .green { background: #62c655; }
.tab { position: relative; width: 361px; height: 80px; display: flex; align-items: center; padding-left: 20px; color: #474747; flex: none; }
.tab.sep::after { content: ""; position: absolute; right: -2px; top: 25px; width: 3px; height: 32px; border-radius: 2px; background: #a8c7fa; }
.tab.active { color: #1f1f1f; }
.tab.active, .tab.active ~ .tab { width: 359.500px; }
.tab-shape { position: absolute; left: -16px; top: 12px; width: 388px; height: 68px; }
.fav { position: relative; width: 32px; height: 32px; }
.tab-title {
  position: relative; margin-left: 17px; width: 220px; height: 34px; line-height: 34px; font-size: 23.500px; white-space: nowrap; overflow: hidden;
  -webkit-mask-image: linear-gradient(90deg, #000 170px, transparent 222px); mask-image: linear-gradient(90deg, #000 170px, transparent 222px);
}
.close { position: relative; width: 16px; margin-left: 24px; stroke: currentColor; stroke-width: 2.800; }
.plus { width: 20px; margin-left: 23px; stroke: #474747; stroke-width: 2.600; }
.dropdown { width: 56px; height: 56px; border-radius: 20px; background: #ebf1fd; display: flex; align-items: center; justify-content: center; margin: 0 12px 0 auto; }
.dropdown svg { width: 16px; fill: none; stroke: #1f1f1f; stroke-width: 3; }

.toolbar-bg { background: #d6e0fc; }
.toolbar { height: 94px; border-bottom: 2px solid #e1e3e1; background: #fff; border-radius: 20px 20px 0 0; display: flex; align-items: center; padding-left: 32px; }
.nav { width: 26px; fill: none; stroke: #474747; stroke-width: 2.800; }
.fwd { margin-left: 45px; stroke: #ababab; }
.reload { margin-left: 46px; }
.omnibox { width: 2424px; height: 68px; margin-left: 39px; border-radius: 34px; background: #edf2fa; display: flex; align-items: center; padding: 0 33px 0 10px; }
.site { width: 48px; height: 48px; border-radius: 50%; background: #fff; display: flex; align-items: center; justify-content: center; }
.site svg { width: 24px; fill: none; stroke: #303030; stroke-width: 2.800; }
.url { margin-left: 16px; font-size: 27.940px; color: #474747; white-space: nowrap; }
.url b { font-weight: 400; color: #1f1f1f; }
.star { width: 30px; margin-left: auto; fill: none; stroke: #474747; stroke-width: 2.600; }
.puzzle { width: 34px; margin-left: 36px; margin-top: -4px; fill: none; stroke: #474747; stroke-width: 3.400; stroke-linejoin: round; }
.tb-div { width: 4px; height: 32px; border-radius: 2px; margin-left: 34px; background: #d3e3fd; }
.avatar { width: 40px; height: 40px; border-radius: 50%; margin-left: 32px; background: #b32b5b; color: #fff; font-size: 21px; display: flex; align-items: center; justify-content: center; }
.kebab { margin-left: 49px; display: flex; flex-direction: column; gap: 5px; }
.kebab i { width: 6px; height: 6px; border-radius: 50%; background: #474747; }

.body { display: flex; height: 1546px; font-family: "Noto Sans CJK SC", "Noto Sans", sans-serif; }
.sidebar { width: 100px; flex: none; background: #252a31; border-right: 2px solid #1a1d22; display: flex; flex-direction: column; }
.side-menu { height: 102px; border-bottom: 2px solid #1c2127; display: flex; align-items: center; justify-content: center; }
.side-menu svg { width: 32px; }
.side-group { height: 234px; border-bottom: 2px solid #1c2127; padding: 20px 0; }
.side-item { height: 64px; display: flex; align-items: center; justify-content: center; }
.side-item svg { width: 32px; fill: #abb3bf; }
.side-active { margin-top: 20px; height: 72px; background: #1c2024; display: flex; align-items: center; justify-content: center; }
.side-active span { width: 48px; height: 48px; border-radius: 4px; background: #262738; display: flex; align-items: center; justify-content: center; }
.side-active svg { width: 32px; }
.side-star { height: 100px; padding: 37px 0 0 33px; }
.side-star svg { width: 40px; }
.side-bottom { margin-top: auto; padding: 20px 0; border-top: 2px solid #1c2127; }
.help { width: 32px; height: 32px; border-radius: 50%; background: #abb3bf; color: #252a31; font-weight: 700; font-size: 24px; line-height: 31px; text-align: center; }
.jl { width: 40px; height: 40px; border-radius: 50%; background: #2a3a58; color: #8abbff; font-weight: 700; font-size: 20px; line-height: 38px; text-align: center; }

.main { width: 2840px; color: #1c2127; font-size: 25.100px; }
.head { position: relative; height: 100px; border-bottom: 2px solid #d9dadc; display: flex; align-items: center; }
.cube { width: 102px; height: 98px; background: #e6eefb; border-right: 2px solid #c9d0dc; display: flex; align-items: center; justify-content: center; }
.cube svg { width: 36px; fill: #5c8eea; }
h1 { margin: -6px 0 0 32px; font-size: 28.500px; font-weight: 700; letter-spacing: -.4px; }
.grip { position: absolute; left: 1384px; top: 0; width: 72px; height: 28px; background: #d5d8dc; color: #fff; font: 17px/29px "DejaVu Sans", sans-serif; text-align: center; border-radius: 0 0 3px 3px; }
.filters { height: 126px; border-bottom: 2px solid #d9dadc; display: flex; justify-content: space-between; }
.pills { display: flex; gap: 12px; padding: 32px 0 0 32px; }
.pills span { height: 48px; line-height: 45px; padding: 0 16px; border-radius: 22px; background: #eeeff1; font-size: 21.450px; }
.actions { width: 504px; border-left: 2px solid #d9dadc; padding: 32px 0 0 32px; display: flex; gap: 20px; }
button { font-family: inherit; font-size: 25.100px; height: 60px; padding: 0 18px; border-radius: 4px; border: 2px solid #c8cacd; background: #f6f7f9; color: #1c2127; line-height: 52px; white-space: nowrap; box-shadow: 0 2px 3px rgba(17,20,24,.1); }
.actions button { width: 209px; padding-bottom: 2px; }
.actions .primary { width: 207px; background: #3f6fcd; border-color: #3560b6; color: #fff; }
.hero { position: relative; height: 387px; border-bottom: 2px solid #d9dadc; display: flex; flex-direction: column; align-items: center; padding-top: 73px; color: #5f6b7c; }
.refresh { position: absolute; right: 20px; top: 20px; width: 60px; height: 60px; border: 2px solid #d2d4d7; border-radius: 4px; display: flex; align-items: center; justify-content: center; }
.refresh svg { width: 28px; }
.trophy { width: 96px; height: 96px; fill: #8f99a8; }
h2 { margin: 36px 0 0; font-size: 32px; line-height: 44px; font-weight: 700; letter-spacing: -.4px; }
p { margin: 17px 0 0; line-height: 40px; }
.prompts { height: 138px; padding-top: 20px; display: flex; justify-content: center; }
.bulb { width: 20px; height: 32px; margin: 0 26px 0 6px; fill: #5f6b7c; }
.chips { display: flex; flex-direction: column; gap: 20px; align-items: flex-start; }
.chip { height: 40px; border-radius: 20px; background: #eeeff1; display: flex; align-items: center; padding: 0 17px 0 16px; font-size: 21.450px; }
.chip em { font-style: normal; line-height: 36px; margin-top: -3px; }
.chip svg { width: 16px; margin-left: 15px; stroke: #5f6b7c; stroke-width: 3.400; stroke-linecap: round; }
.input { position: relative; margin: 0 18px; height: 115px; border: 4px solid #6080bf; border-radius: 6px; padding: 18px 18px; display: flex; justify-content: space-between; }
.caret { width: 2px; height: 36px; background: #111418; }
.send { border: 0; box-shadow: none; background: #e9ebef; color: #989fac; width: 146px; height: 60px; margin: 6px 6px 0 0; display: flex; align-items: center; padding: 0 0 2px 22px; letter-spacing: .3px; }
.send svg { width: 28px; margin: 2px 16px 0 0; fill: none; stroke: #989fac; stroke-width: 3.600; stroke-linecap: round; }
.resize { position: absolute; right: 0; bottom: 0; width: 14px; stroke: #444; stroke-width: 1.300; }

.table { margin-top: 19px; width: 2840px; height: 661px; overflow: hidden; border-top: 2px solid #d9dadc; }
.thead { width: 3052px; height: 100px; display: flex; background: #f5f7fa; border-bottom: 2px solid #d3d5d8; font-weight: 700; font-size: 21.500px; letter-spacing: -.2px; color: #5f6b7c; line-height: 96px; }
.thead > div { position: relative; border-right: 2px dotted #d3d5d8; white-space: pre; }
.thead .c-nbr { border-right: 2px solid #d9dadc; }
.c-check { width: 82px; padding-left: 24px; flex: none; }
.box { display: block; width: 32px; height: 32px; border: 2px solid #738091; border-radius: 4px; background: #fff; }
.thead .box { margin-top: 33px; }
.c-nbr { width: 240px; padding-left: 24px; flex: none; }
.c-name { width: 330px; padding-left: 24px; flex: none; }
.c-val { width: 240px; padding-left: 24px; flex: none; }
.sort { position: absolute; right: 27px; top: 32px; width: 28px; height: 38px; }
.sort text { font: 600 19px Inter, sans-serif; fill: #5f6b7c; }
.row { width: 3052px; height: 60px; display: flex; align-items: flex-end; border-bottom: 2px solid #d9dadc; line-height: 40px; white-space: nowrap; }
.row:nth-child(2) { height: 56px; }
.row > div { height: 47px; }
.row .c-nbr, .row .c-name { height: 100%; display: flex; align-items: flex-end; padding-bottom: 7px; }
.row .c-nbr { border-right: 2px solid #d9dadc; }
.obj { width: 40px; height: 40px; margin-right: 14px; border: 2px solid #3d72e0; border-radius: 4px; background: #5c8eea; display: flex; align-items: center; justify-content: center; }
.obj svg { width: 18px; fill: #fff; }
.row .none { font-style: italic; color: #5f6b7c; letter-spacing: -.35px; padding-left: 23px; }
.shade {
  position: absolute; left: 100px; right: 0; bottom: 0; height: 84px; background: linear-gradient(transparent, rgba(0,0,0,.12));
  -webkit-mask-image: linear-gradient(90deg, transparent, #000 300px, #000 2600px, transparent 2760px); mask-image: linear-gradient(90deg, transparent, #000 300px, #000 2600px, transparent 2760px);
}

.dock {
  margin: 2px 0 0 136px; width: 2667px; height: 104px; flex: none; border-radius: 34px; border: 2px solid #7d7f74; padding-left: 14px;
  display: flex; align-items: flex-start;
  background: linear-gradient(90deg, #585c50, #6d6a52 8%, #585e57 16%, #5a605a 40%, #595d57 60%, #66644f 73%, #6b6657 85%, #786c55);
}
.app { position: relative; width: 66px; height: 66px; margin: 14px 20px 0 0; filter: drop-shadow(0 2px 2px rgba(0,0,0,.3)); }
.app svg { width: 66px; height: 66px; }
.badge { position: absolute; right: -8px; top: -8px; width: 30px; height: 30px; border-radius: 50%; background: #e5503f; color: #fff; font-size: 21px; line-height: 30px; text-align: center; }
.run { position: absolute; left: 28px; top: 76px; width: 8px; height: 8px; border-radius: 50%; background: #000; }
.dock-sep { width: 2px; height: 76px; margin: 13px 28px 0 8px; background: #44402f; }
.doc { width: 56px; height: 72px; margin: 12px 0 0 4px; }
.trash { width: 60px; height: 78px; margin: 8px 0 0 28px; }
</style>
